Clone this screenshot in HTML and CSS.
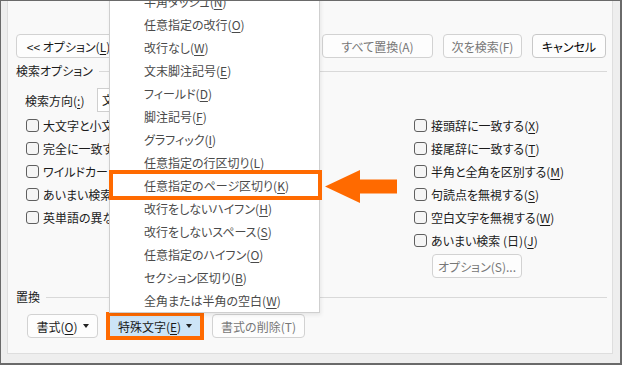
FILE: index.html
```html
<!DOCTYPE html>
<html lang="ja">
<head>
    <meta charset="UTF-8">
    <title>検索と置換</title>
    <link rel="stylesheet" href="styles.css">
</head>
<body>
    <div class="frame">
        <div class="dialog">
            <!-- top buttons -->
            <div class="top-row">
                <button class="btn btn-less"><span>&lt;&lt; オプション(<u>L</u>)</span></button>
                <button class="btn btn-off w-replace"><span>すべて置換(A)</span></button>
                <button class="btn btn-off w-next"><span>次を検索(F)</span></button>
                <button class="btn w-cancel"><span>キャンセル</span></button>
            </div>

            <div class="group-head"><span>検索オプション</span><i class="rule"></i></div>

            <div class="direction">
                <span class="direction-label">検索方向(<u>:</u>)</span>
                <div class="select">文書全体</div>
            </div>

            <div class="checks">
                <div class="check-col">
                    <label class="check"><span class="box"></span><span>大文字と小文字を区別する(<u>H</u>)</span></label>
                    <label class="check"><span class="box"></span><span>完全に一致する単語だけを検索する(<u>Y</u>)</span></label>
                    <label class="check"><span class="box"></span><span>ワイルドカードを使用する(<u>U</u>)</span></label>
                    <label class="check"><span class="box"></span><span>あいまい検索 (英)(<u>J</u>)</span></label>
                    <label class="check"><span class="box"></span><span>英単語の異なる活用形も検索する(<u>W</u>)</span></label>
                </div>
                <div class="check-col">
                    <label class="check"><span class="box"></span><span>接頭辞に一致する(<u>X</u>)</span></label>
                    <label class="check"><span class="box"></span><span>接尾辞に一致する(<u>T</u>)</span></label>
                    <label class="check"><span class="box"></span><span>半角と全角を区別する(<u>M</u>)</span></label>
                    <label class="check"><span class="box"></span><span>句読点を無視する(<u>S</u>)</span></label>
                    <label class="check"><span class="box"></span><span>空白文字を無視する(<u>W</u>)</span></label>
                    <label class="check"><span class="box"></span><span>あいまい検索 (日)(<u>J</u>)</span></label>
                    <button class="btn btn-off btn-fuzzy"><span>オプション(S)...</span></button>
                </div>
            </div>

            <div class="group-head head-replace"><span>置換</span><i class="rule"></i></div>

            <div class="bottom-row">
                <button class="btn w-format"><span>書式(<u>O</u>)</span><i class="caret"></i></button>
                <button class="btn btn-special"><span>特殊文字(<u>E</u>)</span><i class="caret"></i></button>
                <button class="btn btn-off w-clear"><span>書式の削除(T)</span></button>
            </div>
        </div>

        <!-- special characters popup menu -->
        <ul class="menu">
            <li>半角ダッシュ(<u>N</u>)</li>
            <li>任意指定の改行(<u>O</u>)</li>
            <li>改行なし(<u>W</u>)</li>
            <li>文末脚注記号(<u>E</u>)</li>
            <li>フィールド(<u>D</u>)</li>
            <li>脚注記号(<u>F</u>)</li>
            <li>グラフィック(<u>I</u>)</li>
            <li>任意指定の行区切り(<u>L</u>)</li>
            <li>任意指定のページ区切り(<u>K</u>)</li>
            <li>改行をしないハイフン(<u>H</u>)</li>
            <li>改行をしないスペース(<u>S</u>)</li>
            <li>任意指定のハイフン(<u>O</u>)</li>
            <li>セクション区切り(<u>B</u>)</li>
            <li>全角または半角の空白(<u>W</u>)</li>
        </ul>

        <div class="callout"></div>
        <svg class="arrow" width="72" height="33" viewBox="0 0 72 33">
            <polygon points="0,16.5 35,0 35,9.5 72,9.5 72,23.5 35,23.5 35,33" fill="#ff6a00"/>
        </svg>
    </div>
</body>
</html>
```

FILE: styles.css
```css
/* dialog screenshot */
body {
    margin: 0;
    font-family: "Noto Sans CJK JP", sans-serif;
    font-size: 12px;
    font-feature-settings: "palt";
    color: #1b1b1b;
}

.frame {
    position: relative;
    display: flex;
    width: 622px;
    height: 365px;
    box-sizing: border-box;
    border: solid #6a6a6a;
    border-width: 1px 2px 2px 1px;
    padding: 0 7px 9px 6px;
    background-color: #eeeeee;
    overflow: hidden;
}

.dialog {
    flex: 1;
    background-color: #f9f9f9;
    border: 1px solid #dedede;
    border-top: none;
    padding: 33px 6px 0 8px;
}

u {
    text-underline-offset: 2px;
}

/* buttons */
.btn {
    display: inline-flex;
    align-items: center;
    justify-content: center;
    gap: 5px;
    height: 24px;
    box-sizing: border-box;
    padding: 0;
    border: 1px solid #d2d2d2;
    border-radius: 4px;
    background-color: #fdfdfd;
    font: inherit;
    color: #1b1b1b;
    white-space: nowrap;
}
.btn-off {
    color: #777;
}

.top-row {
    display: flex;
    gap: 10px;
}
.btn-less {
    width: 105px;
    margin-right: auto;
}
.w-replace { width: 111px; }
.w-next { width: 79px; }
.w-cancel {
    width: 74px;
    border-color: #c8c8c8;
    color: #000;
}

/* group headers */
.group-head {
    display: flex;
    align-items: center;
    gap: 6px;
    height: 14px;
    margin-top: 6px;
    line-height: 14px;
}
.rule {
    flex: 1;
    height: 1px;
    margin-right: -1px;
    background-color: #d9d9d9;
}
.head-replace {
    margin-top: 12px;
}

/* search direction */
.direction {
    display: flex;
    align-items: center;
    margin-top: 10px;
    padding-left: 9px;
}
.direction-label {
    width: 72px;
}
.select {
    width: 110px;
    height: 24px;
    box-sizing: border-box;
    border: 1px solid #cfcfcf;
    background-color: #fff;
    padding-left: 4px;
    line-height: 22px;
}

/* checkboxes */
.checks {
    display: grid;
    grid-template-columns: 388px 1fr;
    margin-top: 2px;
    padding-left: 10px;
}
.check-col {
    display: flex;
    flex-direction: column;
    align-items: flex-start;
}
.check {
    display: flex;
    align-items: center;
    gap: 4px;
    height: 23px;
    white-space: nowrap;
}
.box {
    width: 13px;
    height: 13px;
    box-sizing: border-box;
    border: 1px solid #5f5f5f;
    border-radius: 3px;
    background-color: #f5f5f5;
}
.btn-fuzzy {
    width: 90px;
    margin: 2px 0 0 18px;
}

/* replace buttons */
.bottom-row {
    display: flex;
    gap: 10px;
    margin-top: 10px;
    padding-left: 11px;
}
.w-format { width: 71px; }
.w-clear { width: 93px; }
.btn-special {
    width: 94px;
    background-color: #cce4f7;
    border-color: #0067c0;
    border-radius: 0;
    outline: 4px solid #ff6a00;
    outline-offset: -2px;
}
.caret {
    width: 0;
    height: 0;
    border-left: 3.5px solid transparent;
    border-right: 3.5px solid transparent;
    border-top: 4px solid #222;
}

/* popup menu */
.menu {
    position: absolute;
    left: 108px;
    top: -12px;
    width: 211px;
    box-sizing: border-box;
    margin: 0;
    padding: 0;
    list-style: none;
    background-color: #fff;
    border: 1px solid #cfcfcf;
    box-shadow: 1px 2px 4px rgba(0, 0, 0, 0.08);
    color: #4a4a4a;
}
.menu li {
    height: 23px;
    line-height: 23px;
    padding-left: 34px;
    white-space: nowrap;
}

.callout {
    position: absolute;
    left: 108px;
    top: 169px;
    width: 213px;
    height: 30px;
    box-sizing: border-box;
    border: 4px solid #ff6a00;
}
.arrow {
    position: absolute;
    left: 324px;
    top: 169px;
}
```
